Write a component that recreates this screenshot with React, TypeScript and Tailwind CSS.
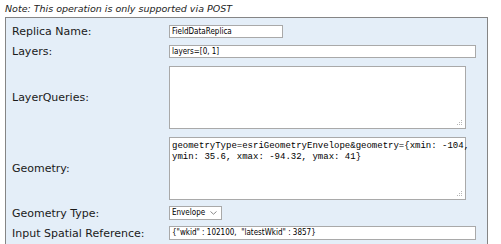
import React from "react";

const inputFont = { fontFamily: '"DejaVu Sans Condensed", "Liberation Sans", sans-serif' };

function Grip() {
  return (
    <svg className="absolute right-[2px] bottom-[2px]" width="7" height="7" viewBox="0 0 7 7">
      <rect x="5" y="1" width="1" height="1" fill="#b5b5b5" />
      <rect x="3" y="3" width="1" height="1" fill="#b5b5b5" />
      <rect x="5" y="3" width="1" height="1" fill="#b5b5b5" />
      <rect x="1" y="5" width="1" height="1" fill="#b5b5b5" />
      <rect x="3" y="5" width="1" height="1" fill="#b5b5b5" />
      <rect x="5" y="5" width="1" height="1" fill="#b5b5b5" />
    </svg>
  );
}

function Label({ children }: { children: React.ReactNode }) {
  return (
    <div className="w-[157px] shrink-0 text-[11px] leading-[13px] text-[#1a1a1a]" style={{ fontFamily: '"DejaVu Sans", Verdana, sans-serif' }}>
      {children}
    </div>
  );
}

function TextBox({ value, w, h }: { value: string; w: string; h: string }) {
  return (
    <div
      className={`${w} ${h} border border-[#a9a9a9] bg-white pl-[2px] text-[8px] leading-[12px] text-black whitespace-pre overflow-hidden`}
      style={inputFont}
    >
      {value}
    </div>
  );
}

export default function App() {
  return (
    <div className="w-[501px] h-[244px] overflow-hidden bg-white">
      <p
        className="pl-[5px] pt-[3px] h-[17px] italic text-[9.5px] leading-[12px] text-[#222]"
        style={{ fontFamily: '"DejaVu Sans", Verdana, sans-serif' }}
      >
        Note: This operation is only supported via POST
      </p>
      <div className="ml-[5px] w-[483px] h-[300px] border border-[#858585] bg-[#e4eef8] pl-[6px] pt-[7px] flex flex-col">
        <div className="flex items-center h-[13px]">
          <Label>Replica Name:</Label>
          <TextBox value="FieldDataReplica" w="w-[114px]" h="h-[13px]" />
        </div>
        <div className="flex items-center h-[13px] mt-[7px]">
          <Label>Layers:</Label>
          <TextBox value="layers=[0, 1]" w="w-[307px]" h="h-[13px]" />
        </div>
        <div className="flex items-center h-[63px] mt-[8px]">
          <Label>LayerQueries:</Label>
          <div className="relative w-[297px] h-[63px] border border-[#a9a9a9] bg-white">
            <Grip />
          </div>
        </div>
        <div className="flex items-center h-[63px] mt-[8px]">
          <Label>Geometry:</Label>
          <div
            className="relative w-[297px] h-[63px] border border-[#a9a9a9] bg-white pl-[2px] pt-[3px] text-[9px] leading-[11px] text-black whitespace-pre"
            style={{ fontFamily: '"Liberation Mono", "Courier New", monospace' }}
          >
            {"geometryType=esriGeometryEnvelope&geometry={xmin: -104,\nymin: 35.6, xmax: -94.32, ymax: 41}"}
            <Grip />
          </div>
        </div>
        <div className="flex items-center h-[14px] mt-[6px]">
          <Label>Geometry Type:</Label>
          <div
            className="w-[53px] h-[14px] border border-[#a9a9a9] bg-white pl-[2px] flex items-center justify-between pr-[4px] text-[8px] leading-[12px] text-black"
            style={inputFont}
          >
            <span>Envelope</span>
            <svg width="7" height="4" viewBox="0 0 7 4">
              <path d="M0.5 0.5 L3.5 3.2 L6.5 0.5" fill="none" stroke="#7a7a7a" strokeWidth="0.9" />
            </svg>
          </div>
        </div>
        <div className="flex items-center h-[14px] mt-[6px]">
          <Label>Input Spatial Reference:</Label>
          <TextBox value={'{"wkid" : 102100,  "latestWkid" : 3857}'} w="w-[307px]" h="h-[14px]" />
        </div>
      </div>
    </div>
  );
}
